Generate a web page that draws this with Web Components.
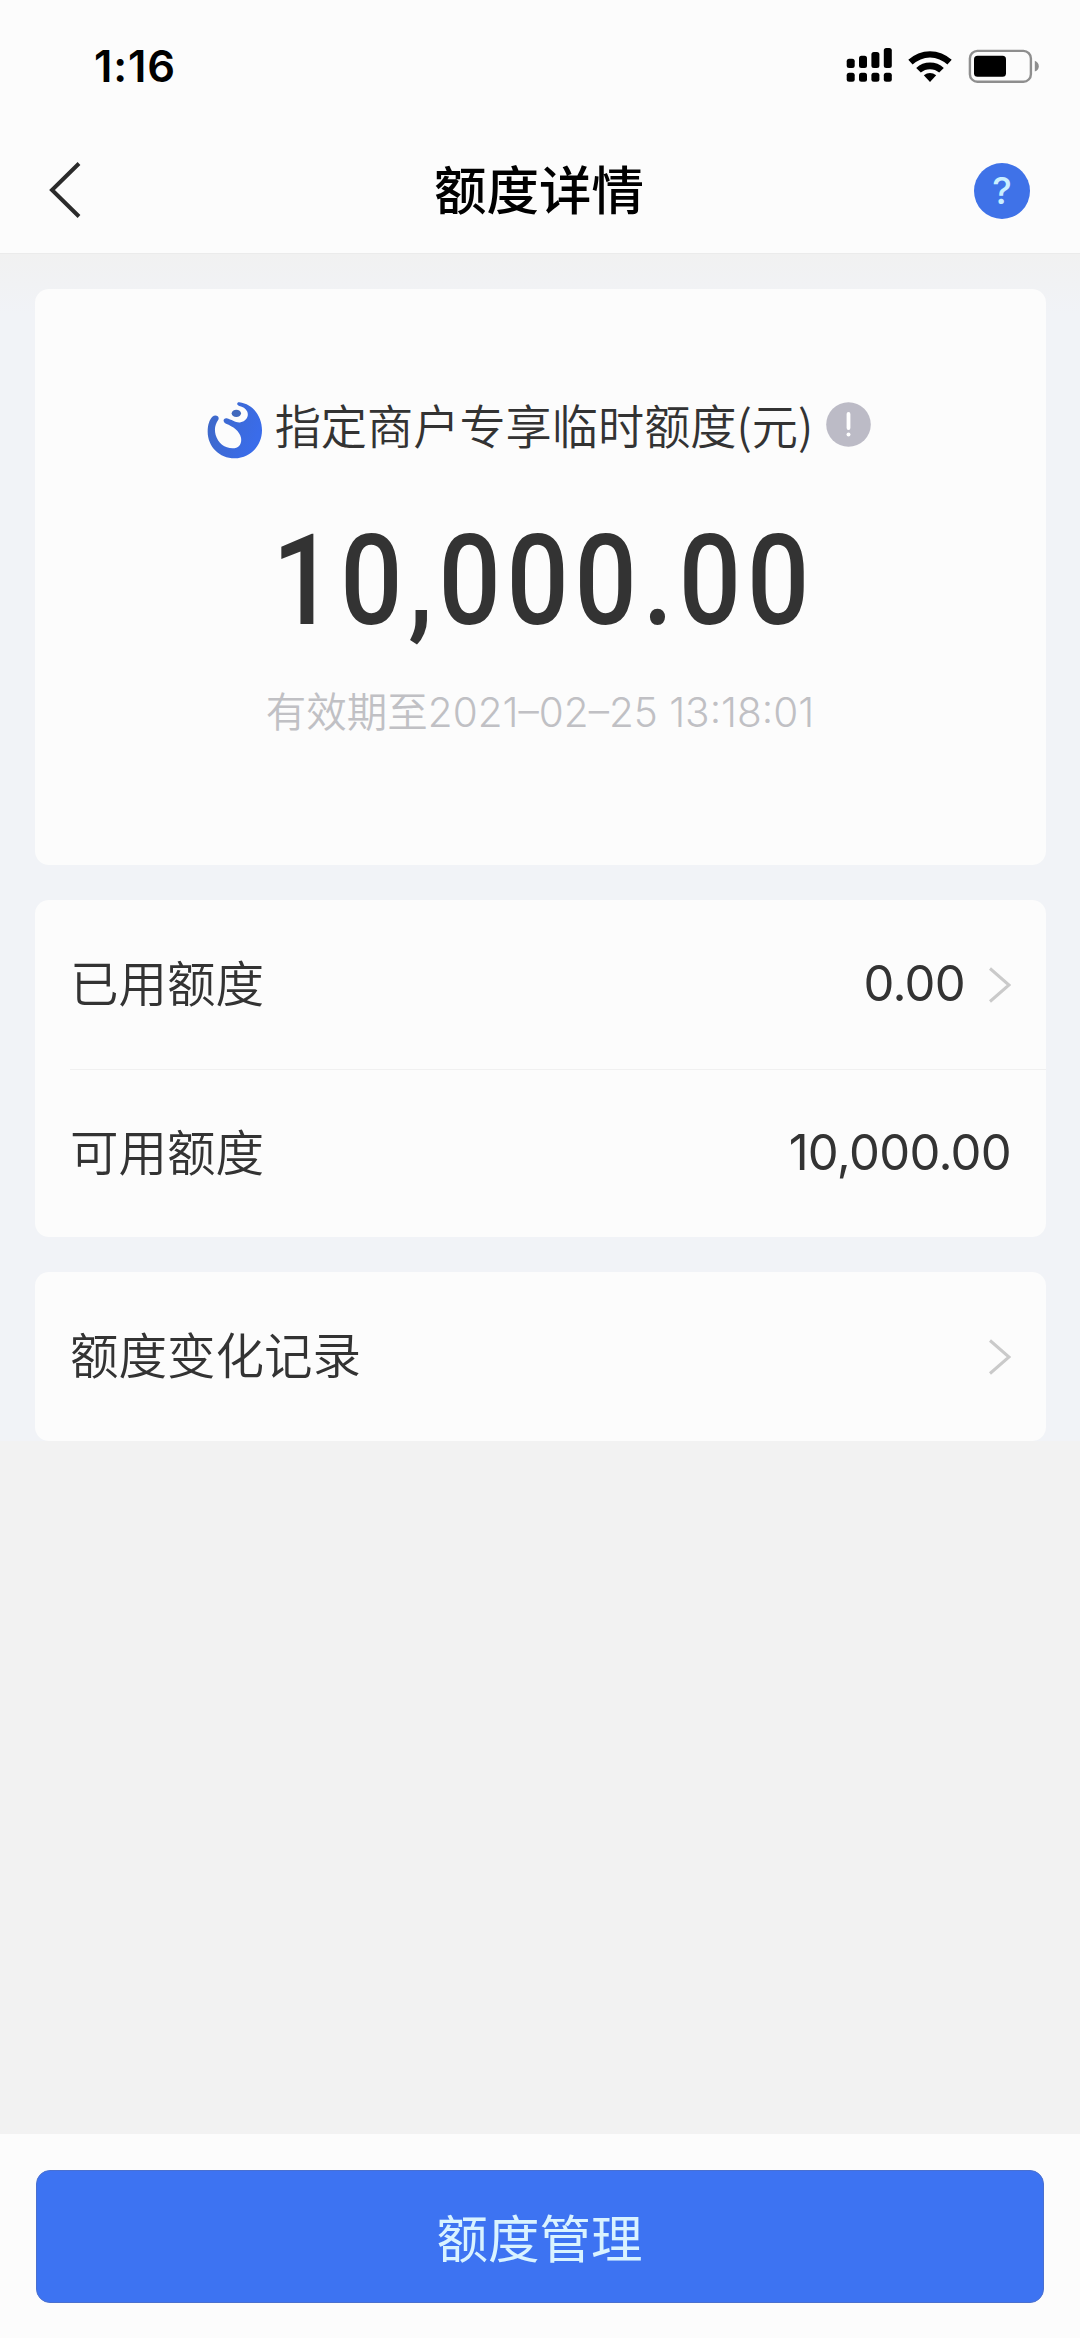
<!DOCTYPE html>
<html lang="zh-CN">
<head>
<meta charset="UTF-8">
<title>额度详情</title>
<style>
    body {
        margin: 0;
        background: #f2f2f2;
        color: #333333;
        font-family: Inter, "Noto Sans CJK SC", sans-serif;
    }
</style>
</head>
<body>
<quota-page>
    <status-bar slot="top" time="1:16"></status-bar>
    <nav-bar slot="top">额度详情</nav-bar>

    <quota-card>
        <quota-summary amount="10,000.00">
            指定商户专享临时额度(元)
            <span slot="expiry">有效期至2021–02–25 13:18:01</span>
        </quota-summary>
    </quota-card>
    <quota-card>
        <quota-row value="0.00" arrow>已用额度</quota-row>
        <quota-row value="10,000.00">可用额度</quota-row>
    </quota-card>
    <quota-card>
        <quota-row arrow>额度变化记录</quota-row>
    </quota-card>

    <action-bar slot="bottom">额度管理</action-bar>
</quota-page>

<script>
class QuotaPage extends HTMLElement {
    constructor() {
        super();
        this.attachShadow({ mode: 'open' });
        this.shadowRoot.innerHTML = `
            <style>
                :host {
                    display: flex;
                    flex-direction: column;
                    width: 1080px;
                    height: 2338px;
                }
                header {
                    background: #fcfcfc;
                }
                main {
                    display: flex;
                    flex-direction: column;
                    gap: 35px;
                    padding: 35px 34px 0 35px;
                    background: linear-gradient(#f1f1f1, #f1f3f7 60px);
                }
                footer {
                    margin-top: auto;
                }
            </style>
            <header><slot name="top"></slot></header>
            <main><slot></slot></main>
            <footer><slot name="bottom"></slot></footer>
        `;
    }
}

class StatusBar extends HTMLElement {
    constructor() {
        super();
        this.attachShadow({ mode: 'open' });
    }

    connectedCallback() {
        this.shadowRoot.innerHTML = `
            <style>
                :host {
                    display: flex;
                    justify-content: space-between;
                    align-items: center;
                    height: 132px;
                    padding: 0 40px 0 94px;
                    box-sizing: border-box;
                    color: #000000;
                }
                .time {
                    padding-top: 2px;
                    font-size: 43.5px;
                    font-weight: 600;
                    line-height: 1;
                    letter-spacing: 0.9px;
                }
                svg {
                    display: block;
                }
            </style>
            <span class="time">${this.getAttribute('time')}</span>
            <svg width="194" height="36" viewBox="846 48 194 36">
                <!-- signal, two SIMs -->
                <rect x="846.7" y="58.7" width="8" height="9.3" rx="2.5"/>
                <rect x="859" y="55.7" width="8" height="12.3" rx="2.5"/>
                <rect x="871.4" y="52" width="8" height="16" rx="2.5"/>
                <rect x="883.8" y="48" width="8" height="20" rx="2.5"/>
                <rect x="846.7" y="72.7" width="8" height="9" rx="2.5"/>
                <rect x="859" y="72.7" width="8" height="9" rx="2.5"/>
                <rect x="871.4" y="72.7" width="8" height="9" rx="2.5"/>
                <rect x="883.8" y="72.7" width="8" height="9" rx="2.5"/>
                <!-- wifi -->
                <path d="M908.3 59.8a31.5 31.5 0 0 1 43.4 0l-4.3 4.8a25 25 0 0 0-34.8 0z"/>
                <path d="M916.2 68a20.4 20.4 0 0 1 27.6 0l-4.6 4.6a14 14 0 0 0-18.4 0z"/>
                <path d="M923.8 75.3a10.5 10.5 0 0 1 12.4 0l-6.2 6.6z"/>
                <!-- battery -->
                <rect x="969.9" y="50.9" width="61" height="30.8" rx="7.5" fill="none" stroke="#8e8e8e" stroke-width="2.4"/>
                <rect x="974" y="55.7" width="32" height="21" rx="3.5"/>
                <path d="M1034.8 60.8q4 1.6 4 5.4t-4 5.4z" fill="#8e8e8e"/>
            </svg>
        `;
    }
}

class NavBar extends HTMLElement {
    constructor() {
        super();
        this.attachShadow({ mode: 'open' });
        this.shadowRoot.innerHTML = `
            <style>
                :host {
                    display: grid;
                    grid-template-columns: 1fr auto 1fr;
                    align-items: center;
                    height: 122px;
                    padding: 0 50px 4px 48px;
                    box-sizing: border-box;
                    border-bottom: 1px solid #ebebeb;
                    color: #000000;
                }
                svg {
                    display: block;
                    margin-bottom: 2px;
                }
                .title {
                    padding-top: 2px;
                    font-size: 52.5px;
                    font-weight: 500;
                    line-height: 1;
                }
                .help {
                    display: flex;
                    justify-content: center;
                    align-items: center;
                    justify-self: end;
                    width: 56px;
                    height: 56px;
                    border-radius: 50%;
                    background: #3f72e8;
                    color: #c9efff;
                    font-size: 37px;
                    font-weight: 500;
                    line-height: 1;
                }
            </style>
            <svg width="34" height="56" viewBox="0 0 34 56" fill="none" stroke="#2b2b2b" stroke-width="4">
                <path d="M31 1.5 4 28l27 26.5"/>
            </svg>
            <div class="title"><slot></slot></div>
            <div class="help">?</div>
        `;
    }
}

class QuotaCard extends HTMLElement {
    constructor() {
        super();
        this.attachShadow({ mode: 'open' });
        this.shadowRoot.innerHTML = `
            <style>
                :host {
                    display: block;
                    border-radius: 14px;
                    background: #fcfcfc;
                    overflow: hidden;
                }
            </style>
            <slot></slot>
        `;
    }
}

class QuotaSummary extends HTMLElement {
    constructor() {
        super();
        this.attachShadow({ mode: 'open' });
    }

    connectedCallback() {
        this.shadowRoot.innerHTML = `
            <style>
                :host {
                    display: flex;
                    flex-direction: column;
                    align-items: center;
                    height: 576px;
                    padding-top: 106px;
                    box-sizing: border-box;
                }
                .label {
                    display: flex;
                    align-items: center;
                    height: 66px;
                    padding-right: 3px;
                    font-family: "Noto Sans CJK SC", sans-serif;
                    font-size: 46.2px;
                    font-weight: 350;
                    line-height: 66px;
                    white-space: nowrap;
                }
                .text {
                    padding-bottom: 8px;
                }
                .logo {
                    margin: 3px 12px 0 0;
                }
                .info {
                    margin: 0 0 8px 13px;
                }
                .amount {
                    margin-top: 45px;
                    padding-left: 6px;
                    font-family: Roboto, sans-serif;
                    font-size: 126px;
                    font-weight: 500;
                    line-height: 150px;
                    letter-spacing: 6.6px;
                    transform: scaleX(0.87);
                }
                .expiry {
                    margin-top: 27px;
                    padding-right: 1px;
                    color: #c0c0c4;
                    font-size: 40.5px;
                    font-weight: 350;
                    line-height: 60px;
                    white-space: nowrap;
                }
            </style>
            <div class="label">
                <svg class="logo" width="56" height="58" viewBox="80 92 168 174">
                    <defs>
                        <linearGradient id="blue" x1="0" y1="0" x2="1" y2="0.4">
                            <stop offset="0" stop-color="#3f68c4"/>
                            <stop offset="1" stop-color="#3a6cea"/>
                        </linearGradient>
                    </defs>
                    <path fill="url(#blue)" d="M177 96C218 101 245 138 245 180C245 228 208 264 163 264C117 264 82 228 82 184C82 163 87 149 96 139C105 131 119 137 114 148C105 160 101 176 106 194C113 218 133 234 157 234C177 234 185 219 182 202C178 182 158 168 137 160C126 155 128 143 139 144C155 148 168 159 181 156C198 151 206 138 201 124C196 114 187 109 177 107C168 104 169 95 177 96Z"/>
                    <ellipse cx="168" cy="129" rx="14" ry="11" fill="#4169bd"/>
                </svg>
                <div class="text"><slot></slot></div>
                <svg class="info" width="45" height="45" viewBox="0 0 45 45">
                    <circle cx="22.5" cy="22.5" r="22.3" fill="#bcbbc6"/>
                    <path d="M22.5 12v14" stroke="#ffffff" stroke-width="3.8" stroke-linecap="round"/>
                    <circle cx="22.5" cy="32.5" r="2" fill="#ffffff"/>
                </svg>
            </div>
            <div class="amount">${this.getAttribute('amount')}</div>
            <div class="expiry"><slot name="expiry"></slot></div>
        `;
    }
}

class QuotaRow extends HTMLElement {
    constructor() {
        super();
        this.attachShadow({ mode: 'open' });
    }

    connectedCallback() {
        const value = this.getAttribute('value') || '';
        const arrow = this.hasAttribute('arrow') ? `
            <svg width="22" height="36" viewBox="0 0 22 36" fill="none" stroke="#cacaca" stroke-width="3">
                <path d="M1 1.5 20 18 1 34.5"/>
            </svg>
        ` : '';

        this.shadowRoot.innerHTML = `
            <style>
                :host {
                    display: flex;
                    align-items: center;
                    height: 169px;
                    padding: 0 35px 0 35px;
                    font-size: 48.5px;
                    font-weight: 350;
                    line-height: 72px;
                }
                :host(:not(:first-child)) {
                    height: 167px;
                    margin-left: 35px;
                    padding-left: 0;
                    border-top: 1px solid #f0f0f0;
                }
                .label {
                    flex: 1;
                }
                .value {
                    padding-bottom: 2px;
                    font-size: 49px;
                    font-weight: 380;
                    letter-spacing: -0.7px;
                }
                svg {
                    margin-left: 24px;
                }
            </style>
            <div class="label"><slot></slot></div>
            <div class="value">${value}</div>
            ${arrow}
        `;
    }
}

class ActionBar extends HTMLElement {
    constructor() {
        super();
        this.attachShadow({ mode: 'open' });
        this.shadowRoot.innerHTML = `
            <style>
                :host {
                    display: block;
                    height: 204px;
                    padding: 36px 36px 0;
                    box-sizing: border-box;
                    background: #fcfcfc;
                }
                button {
                    display: block;
                    width: 100%;
                    height: 133px;
                    padding: 0 1px 3px 0;
                    border: 1px solid #4a70cf;
                    border-radius: 14px;
                    background: #3d73f2;
                    color: #d9f3ff;
                    font-family: inherit;
                    font-size: 51.5px;
                    font-weight: 400;
                }
            </style>
            <button><slot></slot></button>
        `;
    }
}

customElements.define('quota-page', QuotaPage);
customElements.define('status-bar', StatusBar);
customElements.define('nav-bar', NavBar);
customElements.define('quota-card', QuotaCard);
customElements.define('quota-summary', QuotaSummary);
customElements.define('quota-row', QuotaRow);
customElements.define('action-bar', ActionBar);
</script>
</body>
</html>
